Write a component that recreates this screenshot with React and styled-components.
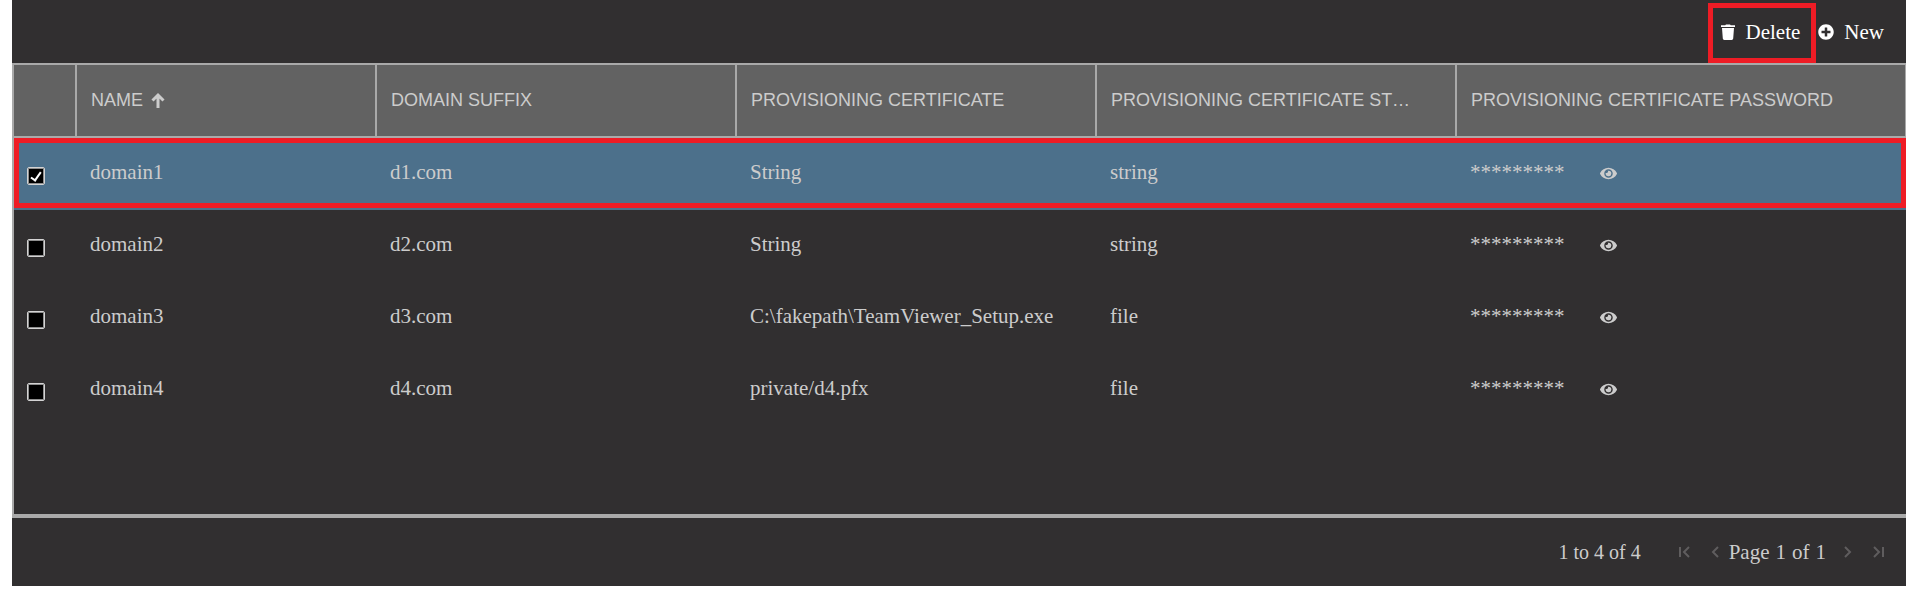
import React, { useState } from "react";
import styled, { createGlobalStyle } from "styled-components";
import { FaEye, FaPlusCircle } from "react-icons/fa";

const line = "#a9a9a9";
const mark = "#ee1c25";
const serif = '"Liberation Serif", "Times New Roman", serif';

const GlobalStyle = createGlobalStyle`
  *, *::before, *::after { box-sizing: border-box; }
  body { margin: 0; background: #fff; font-family: ${serif}; }
`;

const Panel = styled.main`
  margin-left: 12px;
  background: #312f30;
  color: #ccc;
  font-size: 21px;
  line-height: 24px;
`;

const Toolbar = styled.div`
  display: flex;
  justify-content: flex-end;
  padding: 3px 16px 0 0;
`;

const ToolButton = styled.button`
  display: flex;
  align-items: center;
  gap: ${(p) => (p.$marked ? 11 : 10)}px;
  height: 60px;
  padding: ${(p) => (p.$marked ? "0 11px 2px 8px" : "0 6px 2px 2px")};
  border: ${(p) => (p.$marked ? `5px solid ${mark}` : "0")};
  background: none;
  color: #fff;
  font: 21px/24px ${serif};
  cursor: pointer;
`;

const Grid = styled.div`
  min-height: 455px;
  border-top: 2px solid ${line};
  border-left: 2px solid ${line};
  border-bottom: 4px solid ${line};
`;

const Table = styled.table`
  width: 100%;
  table-layout: fixed;
  border-collapse: separate;
  border-spacing: 0;
`;

const Col = styled.col`
  width: ${(p) => (p.$width ? `${p.$width}px` : "auto")};
`;

const HeadCell = styled.th`
  height: 73px;
  padding: 0 36px 2px 14px;
  background: #626262;
  border-right: 2px solid ${line};
  border-bottom: 2px solid ${line};
  font: 18px/24px "Liberation Sans", Arial, sans-serif;
  text-align: left;
  text-transform: uppercase;
  white-space: nowrap;
  overflow: hidden;
  text-overflow: ellipsis;
  &:last-child { border-right-width: 1px; }
`;

const SortButton = styled.button`
  display: flex;
  align-items: center;
  gap: 8px;
  padding: 0;
  border: 0;
  background: none;
  color: inherit;
  font: inherit;
  text-transform: inherit;
`;

const Row = styled.tr`
  position: relative;
  background: ${(p) => (p.$selected ? "#4c708b" : "transparent")};
`;

const MarkedRow = styled(Row)`
  & > td:first-child::after {
    content: "";
    position: absolute;
    inset: 0 0 2px;
    border: 5px solid ${mark};
    pointer-events: none;
  }
`;

const Cell = styled.td`
  height: 72px;
  padding: 0 15px 4px 13px;
`;

const CheckCell = styled(Cell)`
  padding: 4px 0 0 13px;
`;

const Check = styled.input`
  appearance: none;
  display: grid;
  place-items: center;
  width: 18px;
  height: 18px;
  margin: 0;
  border: 1px solid #d4d4d4;
  border-radius: 2px;
  background: #000;
  box-shadow: inset 0 0 0 1px #8f8f8f;
  &:checked::after {
    content: "";
    width: 6px;
    height: 11px;
    margin-bottom: 2px;
    border: solid #fff;
    border-width: 0 2px 2px 0;
    transform: rotate(35deg);
  }
`;

const Secret = styled.div`
  display: flex;
  align-items: center;
  gap: 35px;
`;

const EyeButton = styled.button`
  display: flex;
  padding: 2px 0 0;
  border: 0;
  background: none;
  color: inherit;
`;

const Footer = styled.footer`
  display: flex;
  align-items: center;
  justify-content: flex-end;
  gap: 38px;
  height: 68px;
  padding-right: 22px;
`;

const Summary = styled.span`
  font-size: 20px;
`;

const Pager = styled.nav`
  display: flex;
  align-items: center;
`;

const PageButtons = styled.div`
  display: flex;
  gap: 20px;
`;

const PageButton = styled.button`
  display: flex;
  padding: 0;
  border: 0;
  background: none;
  color: #5f5d5e;
`;

const PageStatus = styled.div`
  display: flex;
  gap: 6px;
  padding: 0 16px 0 8px;
`;

const columns = [
  { title: "Domain suffix", width: 360 },
  { title: "Provisioning certificate", width: 360 },
  { title: "Provisioning certificate storage", width: 360 },
  { title: "Provisioning certificate password" },
];

const domains = [
  ["domain1", "d1.com", "String", "string"],
  ["domain2", "d2.com", "String", "string"],
  ["domain3", "d3.com", "C:\\fakepath\\TeamViewer_Setup.exe", "file"],
  ["domain4", "d4.com", "private/d4.pfx", "file"],
];

const TrashIcon = () => (
  <svg width="14" height="16" viewBox="0 0 14 16" fill="currentColor" aria-hidden="true">
    <path d="M0 1.300h4.200L5 .4h4l.8.9H14v1.700H0zM1 4h12l-.8 10.600A1.500 1.500 0 0 1 10.700 16H3.300a1.500 1.500 0 0 1-1.500-1.400z" />
  </svg>
);

const UpIcon = () => (
  <svg width="14" height="16" viewBox="0 0 14 16" fill="none" stroke="currentColor" strokeWidth="3" aria-hidden="true">
    <path d="M7 16V3M1.500 8.500L7 3l5.500 5.500" />
  </svg>
);

const paths = {
  first: "M1 1v10M10 1L5 6l5 5",
  previous: "M8 1L3 6l5 5",
  next: "M3 1l5 5-5 5",
  last: "M1 1l5 5-5 5M10 1v10",
};

const PageIcon = ({ kind }) => (
  <svg width="11" height="12" viewBox="0 0 11 12" fill="none" stroke="currentColor" strokeWidth="2" aria-hidden="true">
    <path d={paths[kind]} />
  </svg>
);

export default function App() {
  const [selected, setSelected] = useState(["domain1"]);
  const toggle = (name) =>
    setSelected((s) => (s.includes(name) ? s.filter((n) => n !== name) : [...s, name]));

  return (
    <>
      <GlobalStyle />
      <Panel>
        <Toolbar>
          <ToolButton type="button" $marked><TrashIcon />Delete</ToolButton>
          <ToolButton type="button"><FaPlusCircle size={16} />New</ToolButton>
        </Toolbar>
        <Grid>
          <Table>
            <colgroup>
              <Col $width={63} />
              <Col $width={300} />
              {columns.map((c) => <Col key={c.title} $width={c.width} />)}
            </colgroup>
            <thead>
              <tr>
                <HeadCell aria-label="Select" />
                <HeadCell aria-sort="ascending">
                  <SortButton type="button">Name<UpIcon /></SortButton>
                </HeadCell>
                {columns.map((c) => <HeadCell key={c.title}>{c.title}</HeadCell>)}
              </tr>
            </thead>
            <tbody>
              {domains.map(([name, ...rest], i) => {
                const RowKind = i === 0 ? MarkedRow : Row;
                return (
                  <RowKind key={name} $selected={selected.includes(name)}>
                    <CheckCell>
                      <Check
                        type="checkbox"
                        aria-label={`Select ${name}`}
                        checked={selected.includes(name)}
                        onChange={() => toggle(name)}
                      />
                    </CheckCell>
                    <Cell>{name}</Cell>
                    {rest.map((text, n) => <Cell key={n}>{text}</Cell>)}
                    <Cell>
                      <Secret>
                        *********
                        <EyeButton type="button" aria-label="Show password"><FaEye size={17} /></EyeButton>
                      </Secret>
                    </Cell>
                  </RowKind>
                );
              })}
            </tbody>
          </Table>
        </Grid>
        <Footer>
          <Summary>1 to 4 of 4</Summary>
          <Pager aria-label="Pages">
            <PageButtons>
              <PageButton type="button" aria-label="First page"><PageIcon kind="first" /></PageButton>
              <PageButton type="button" aria-label="Previous page"><PageIcon kind="previous" /></PageButton>
            </PageButtons>
            <PageStatus>
              <span>Page</span> <span>1</span> <span>of</span> <span>1</span>
            </PageStatus>
            <PageButtons>
              <PageButton type="button" aria-label="Next page"><PageIcon kind="next" /></PageButton>
              <PageButton type="button" aria-label="Last page"><PageIcon kind="last" /></PageButton>
            </PageButtons>
          </Pager>
        </Footer>
      </Panel>
    </>
  );
}
